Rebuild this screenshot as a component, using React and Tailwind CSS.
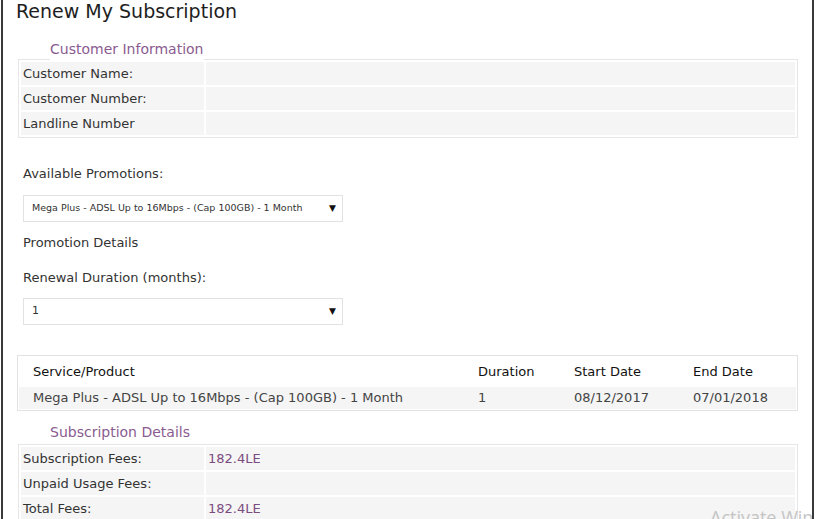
import React from 'react';

const font = { fontFamily: '"DejaVu Sans", Verdana, sans-serif' };

const InfoTable = ({ rows }) => (
  <div className="border border-[#e6e6e6]">
    <table className="w-full border-separate border-spacing-[2px] text-[13px] text-[#333]">
      <tbody>
        {rows.map(([label, value]) => (
          <tr key={label}>
            <td className="w-[183px] bg-[#f5f5f5] px-[2px] h-[23px] leading-[23px]">{label}</td>
            <td className="bg-[#f5f5f5] px-[2px] h-[23px] leading-[23px] text-[#7b4c80]">{value}</td>
          </tr>
        ))}
      </tbody>
    </table>
  </div>
);

const Legend = ({ children, tall }) => (
  <div className={tall ? 'pl-[32px] h-[24px]' : 'pl-[32px] h-[22px]'}>
    <span className="inline-block bg-white text-[14px] leading-[22px] text-[#8a5b8f]">{children}</span>
  </div>
);

const Select = ({ value, small }) => (
  <div className="flex h-[27px] w-[320px] items-center justify-between border border-[#e2e2e2] bg-white pl-[8px] pr-[6px]">
    <span className={small ? 'text-[9.5px] text-[#333]' : 'text-[11px] text-[#333]'}>{value}</span>
    <span className="text-[9px] text-[#111]">▼</span>
  </div>
);

export default function App() {
  return (
    <div className="relative h-[519px] overflow-hidden bg-white" style={font}>
      <div className="ml-px h-full w-[813px] border-x-2 border-[#3a3a3a]">
        <h1 className="pl-[13px] text-[19px] leading-[22px] text-[#1e1e1e]">Renew My Subscription</h1>

        <div className="mt-[15px] pl-[15px] pr-[14px]">
          <Legend>Customer Information</Legend>
          <InfoTable rows={[['Customer Name:', ''], ['Customer Number:', ''], ['Landline Number', '']]} />
        </div>

        <div className="pl-[20px] text-[13px] text-[#333]">
          <div className="mt-[27px] leading-[18px]">Available Promotions:</div>
          <div className="mt-[12px]">
            <Select small value="Mega Plus - ADSL Up to 16Mbps - (Cap 100GB) - 1 Month" />
          </div>
          <div className="mt-[12px] leading-[18px]">Promotion Details</div>
          <div className="mt-[17px] leading-[18px]">Renewal Duration (months):</div>
          <div className="mt-[11px]">
            <Select value="1" />
          </div>
        </div>

        <div className="mx-[14px] mt-[30px] border border-[#e2e2e2] p-px text-[13px]">
          <div className="flex h-[30px] items-center text-[#111]">
            <div className="w-[459px] pl-[14px] font-medium">Service/Product</div>
            <div className="w-[96px]">Duration</div>
            <div className="w-[119px]">Start Date</div>
            <div>End Date</div>
          </div>
          <div className="flex h-[22px] items-center bg-[#f5f5f5] text-[#444]">
            <div className="w-[459px] pl-[14px]">Mega Plus - ADSL Up to 16Mbps - (Cap 100GB) - 1 Month</div>
            <div className="w-[96px]">1</div>
            <div className="w-[119px]">08/12/2017</div>
            <div>07/01/2018</div>
          </div>
        </div>

        <div className="mt-[9px] pl-[15px] pr-[14px]">
          <Legend tall>Subscription Details</Legend>
          <InfoTable rows={[['Subscription Fees:', '182.4LE'], ['Unpaid Usage Fees:', ''], ['Total Fees:', '182.4LE']]} />
        </div>
      </div>
      <div className="absolute left-[710px] top-[505px] whitespace-nowrap text-[18px] leading-[24px] text-[#c4c4c4]" style={{ fontFamily: '"Open Sans", sans-serif' }}>Activate Windows</div>
      <div className="absolute left-[812px] top-0 h-full w-[2px] bg-[#3a3a3a]" />
      <div className="absolute left-[814px] top-0 h-full w-[2px] bg-white" />
    </div>
  );
}
